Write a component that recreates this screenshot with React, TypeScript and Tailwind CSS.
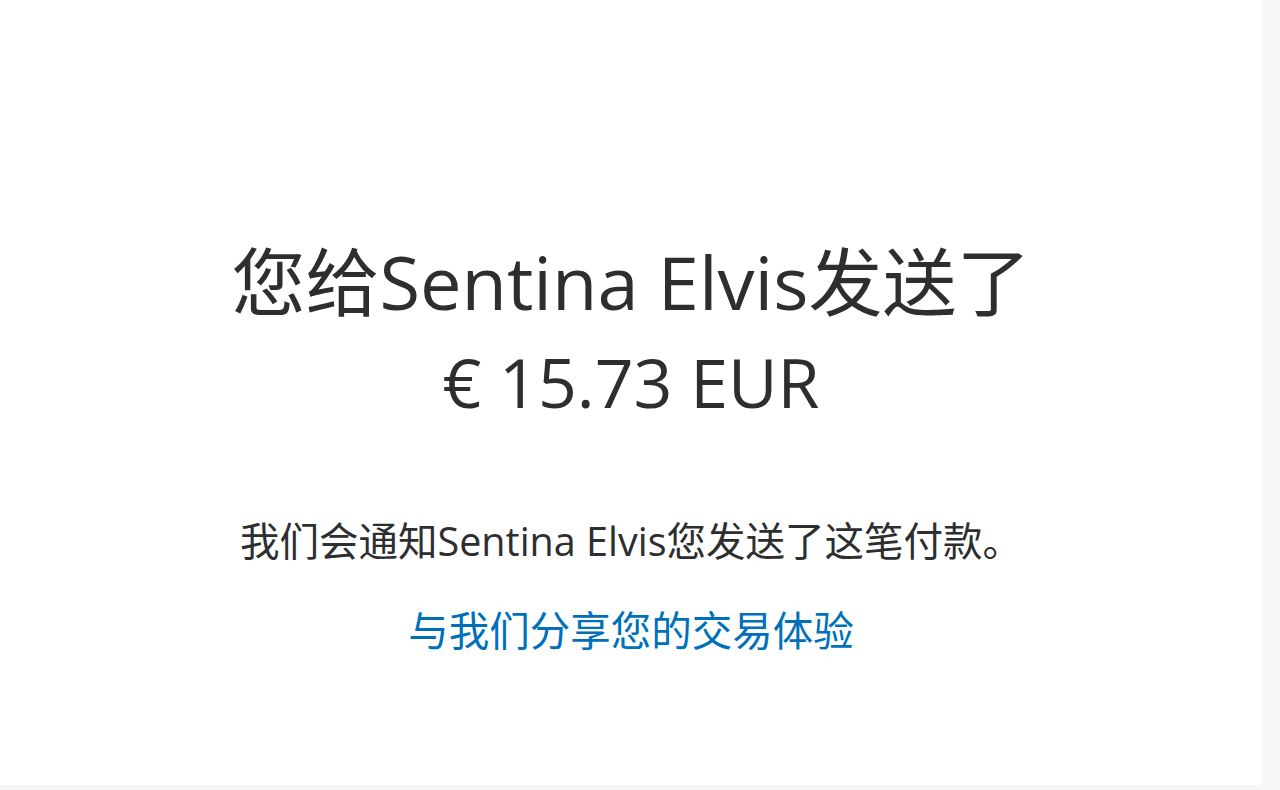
export default function App() {
  return (
    <div className="flex h-[790px] w-[1280px] bg-[#f5f6f8] font-['Open_Sans','Noto_Sans_CJK_SC',sans-serif]">
      <div className="flex h-[785px] w-[1262px] flex-col items-center bg-white pt-[232px] text-center text-[#2c2e2f]">
        <h1 className="text-[74px] font-normal leading-[100px]">
          您给Sentina Elvis发送了
          <span className="block text-[68px]">€ 15.73 EUR</span>
        </h1>
        <p className="mt-[85px] text-[39.5px] leading-[48px]">我们会通知Sentina Elvis您发送了这笔付款。</p>
        <a href="#" className="mt-[42px] text-[40.5px] leading-[48px] text-[#0070ba]">
          与我们分享您的交易体验
        </a>
      </div>
    </div>
  )
}
